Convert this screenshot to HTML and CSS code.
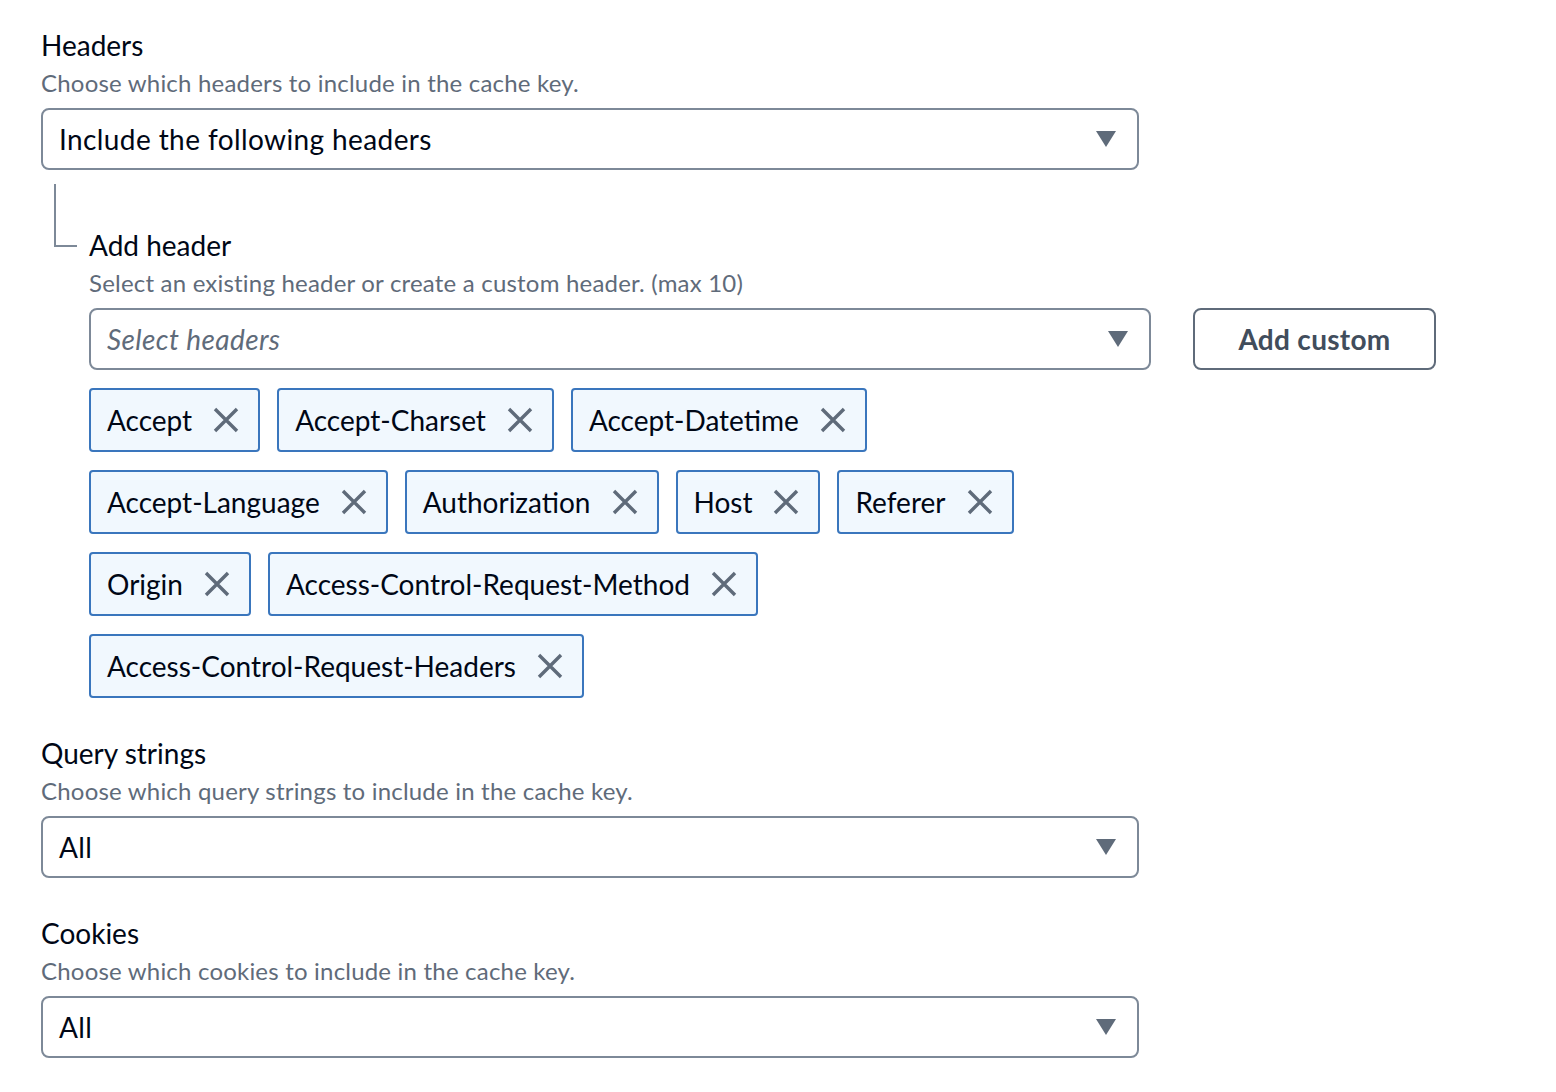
FILE: index.html
```html
<!DOCTYPE html>
<html lang="en">
<head>
<meta charset="utf-8">
<title>Cache key settings</title>
<link rel="stylesheet" href="styles.css">
</head>
<body>
<main class="form">
  <section class="field">
    <div class="label">Headers</div>
    <div class="desc">Choose which headers to include in the cache key.</div>
    <div class="select wide">
      <span class="value">Include the following headers</span>
      <svg class="caret" viewBox="0 0 20 16"><path d="M0 0h20L10 16z"/></svg>
    </div>
  </section>

  <section class="nested">
    <div class="label">Add header</div>
    <div class="desc">Select an existing header or create a custom header. (max 10)</div>
    <div class="control-row">
      <div class="select inner">
        <span class="placeholder">Select headers</span>
        <svg class="caret" viewBox="0 0 20 16"><path d="M0 0h20L10 16z"/></svg>
      </div>
      <button class="btn">Add custom</button>
    </div>
    <div class="tokens">
      <div class="token"><span>Accept</span><svg class="x" viewBox="0 0 26 26"><path d="M2 2L24 24M24 2L2 24"/></svg></div>
      <div class="token"><span>Accept-Charset</span><svg class="x" viewBox="0 0 26 26"><path d="M2 2L24 24M24 2L2 24"/></svg></div>
      <div class="token"><span>Accept-Datetime</span><svg class="x" viewBox="0 0 26 26"><path d="M2 2L24 24M24 2L2 24"/></svg></div>
      <div class="token"><span>Accept-Language</span><svg class="x" viewBox="0 0 26 26"><path d="M2 2L24 24M24 2L2 24"/></svg></div>
      <div class="token"><span>Authorization</span><svg class="x" viewBox="0 0 26 26"><path d="M2 2L24 24M24 2L2 24"/></svg></div>
      <div class="token"><span>Host</span><svg class="x" viewBox="0 0 26 26"><path d="M2 2L24 24M24 2L2 24"/></svg></div>
      <div class="token"><span>Referer</span><svg class="x" viewBox="0 0 26 26"><path d="M2 2L24 24M24 2L2 24"/></svg></div>
      <div class="token"><span>Origin</span><svg class="x" viewBox="0 0 26 26"><path d="M2 2L24 24M24 2L2 24"/></svg></div>
      <div class="token"><span>Access-Control-Request-Method</span><svg class="x" viewBox="0 0 26 26"><path d="M2 2L24 24M24 2L2 24"/></svg></div>
      <div class="token"><span>Access-Control-Request-Headers</span><svg class="x" viewBox="0 0 26 26"><path d="M2 2L24 24M24 2L2 24"/></svg></div>
    </div>
  </section>

  <section class="field spaced">
    <div class="label">Query strings</div>
    <div class="desc">Choose which query strings to include in the cache key.</div>
    <div class="select wide">
      <span class="value">All</span>
      <svg class="caret" viewBox="0 0 20 16"><path d="M0 0h20L10 16z"/></svg>
    </div>
  </section>

  <section class="field spaced">
    <div class="label">Cookies</div>
    <div class="desc">Choose which cookies to include in the cache key.</div>
    <div class="select wide">
      <span class="value">All</span>
      <svg class="caret" viewBox="0 0 20 16"><path d="M0 0h20L10 16z"/></svg>
    </div>
  </section>
</main>
</body>
</html>
```

FILE: styles.css
```css
* { box-sizing: border-box; }

html, body {
  margin: 0;
  padding: 0;
  background: #ffffff;
}

body {
  font-family: Lato, "Open Sans", "Noto Sans", sans-serif;
  color: #000716;
}

.form {
  display: flex;
  flex-direction: column;
  padding: 23px 0 0 41px;
}

.label {
  font-size: 28px;
  line-height: 44px;
  color: #000716;
}

.desc {
  font-size: 24px;
  line-height: 32px;
  color: #5f6b7a;
  letter-spacing: 0.2px;
  margin-bottom: 9px;
}

.select {
  height: 62px;
  border: 2px solid #7d8998;
  border-radius: 8px;
  display: flex;
  align-items: center;
  justify-content: space-between;
  padding: 0 21px 0 16px;
  font-size: 28px;
  background: #fff;
}

.select.wide { width: 1098px; }
.select.inner { width: 1062px; }

.value {
  color: #000716;
  letter-spacing: 0.4px;
}

.placeholder {
  color: #5f6b7a;
  font-style: italic;
  letter-spacing: 0.4px;
}

.caret {
  width: 20px;
  height: 16px;
  fill: #5f6b7a;
  flex: none;
}

.nested {
  position: relative;
  padding: 53px 0 0 48px;
}

.nested::before {
  content: "";
  position: absolute;
  left: 13px;
  top: 14px;
  width: 21px;
  height: 61px;
  border-left: 2px solid #7d8998;
  border-bottom: 2px solid #7d8998;
}

.control-row {
  display: flex;
  align-items: center;
  gap: 42px;
}

.btn {
  width: 243px;
  height: 62px;
  border: 2px solid #5f6b7a;
  border-radius: 8px;
  background: #fff;
  font-family: inherit;
  font-size: 28px;
  font-weight: 700;
  color: #414d5c;
  letter-spacing: 0.3px;
  padding: 0;
}

.tokens {
  display: flex;
  flex-wrap: wrap;
  column-gap: 17px;
  row-gap: 18px;
  margin-top: 18px;
  width: 1062px;
}

.token {
  height: 64px;
  display: flex;
  align-items: center;
  gap: 21px;
  padding: 0 19px 0 16px;
  border: 2px solid #3a76bd;
  border-radius: 4px;
  background: #f1f8fe;
  font-size: 28px;
  color: #000716;
}

.x {
  width: 26px;
  height: 26px;
  stroke: #5f6b7a;
  stroke-width: 3.4;
  fill: none;
  flex: none;
}

.spaced { margin-top: 33px; }
```
